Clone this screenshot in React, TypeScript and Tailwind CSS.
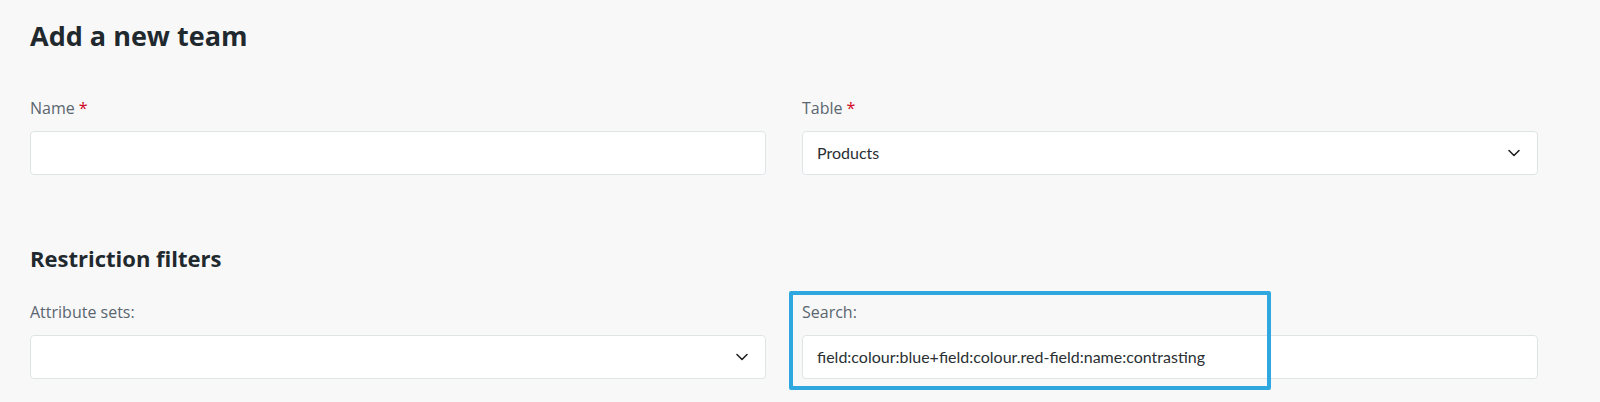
import React from "react";

const Chevron = () => (
  <svg width="14" height="14" viewBox="0 0 14 14" fill="none" className="shrink-0">
    <path d="M2 4.5 L7 9.5 L12 4.5" stroke="#222" strokeWidth="1.6" strokeLinecap="round" strokeLinejoin="round" />
  </svg>
);

const Label = ({ children, required }: { children: React.ReactNode; required?: boolean }) => (
  <div className="text-[16px] leading-5 text-[#5a6670] mb-[13px]" style={{ fontFamily: '"Open Sans", sans-serif' }}>
    {children}
    {required && <span className="text-[#d0021b] ml-1">*</span>}
  </div>
);

const boxCls =
  "h-[44px] w-full bg-white border border-[#dfe5e7] rounded-[4px] flex items-center px-[14px] text-[16px] text-[#2a2f33]";

export default function App() {
  return (
    <div className="relative h-[402px] w-full overflow-hidden bg-[#f8f8f8] pl-[30px] pr-[62px] pt-[18px]" style={{ fontFamily: 'Lato, sans-serif' }}>
      <h1 className="text-[27px] leading-[36px] font-bold text-[#1f292e]" style={{ fontFamily: '"Open Sans", sans-serif' }}>
        Add a new team
      </h1>
      <div className="grid grid-cols-2 gap-x-[36px] mt-[44px]">
        <div>
          <Label required>Name</Label>
          <div className={boxCls}></div>
        </div>
        <div>
          <Label required>Table</Label>
          <div className={boxCls + " justify-between pr-[16px]"}>
            <span>Products</span>
            <Chevron />
          </div>
        </div>
      </div>
      <h2 className="mt-[68px] text-[22px] leading-[30px] font-bold text-[#1f292e]" style={{ fontFamily: '"Open Sans", sans-serif' }}>
        Restriction filters
      </h2>
      <div className="grid grid-cols-2 gap-x-[36px] mt-[29px]">
        <div>
          <Label>Attribute sets:</Label>
          <div className={boxCls + " justify-end pr-[16px]"}>
            <Chevron />
          </div>
        </div>
        <div>
          <Label>Search:</Label>
          <div className={boxCls}>field:colour:blue+field:colour.red-field:name:contrasting</div>
        </div>
      </div>
      <div className="absolute left-[789px] top-[291px] w-[482px] h-[99px] border-[4px] border-[#2ea8df] rounded-[2px] pointer-events-none"></div>
    </div>
  );
}
